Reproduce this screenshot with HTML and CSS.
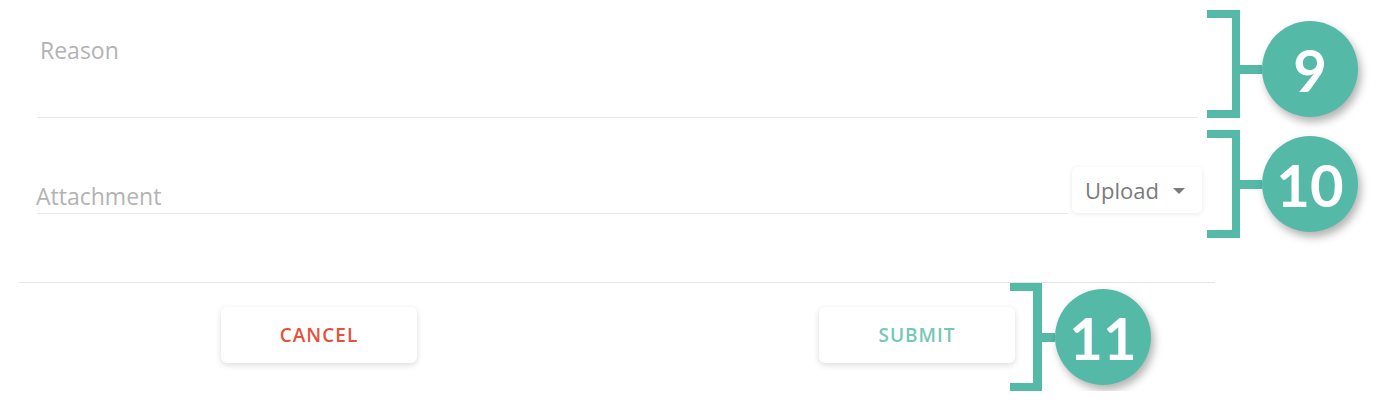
FILE: index.html
```html
<!doctype html>
<html lang="en">
<head>
<meta charset="UTF-8">
<meta name="viewport" content="width=device-width,initial-scale=1">
<title>Request form</title>
<link rel="stylesheet" href="styles.css">
</head>
<body>

<!-- ========================  FORM SHEET  ==================== -->
<div class="sheet">

  <!-- REASON -->
  <div class="row row-reason">
    <div class="field field-reason"><span class="label">Reason</span></div>
    <div class="marker low">
      <div class="bracket"></div><div class="stub"></div><div class="num">9</div>
    </div>
  </div>

  <!-- ATTACHMENT -->
  <div class="row row-attach">
    <div class="attach-box">
      <div class="field field-attach"><span class="label">Attachment</span></div>
      <button class="upload">Upload<span class="caret"></span></button>
    </div>
    <div class="marker">
      <div class="bracket"></div><div class="stub"></div><div class="num">10</div>
    </div>
  </div>

  <div class="divider"></div>

  <!-- ACTIONS -->
  <div class="row row-actions">
    <button class="btn btn-cancel">CANCEL</button>
    <button class="btn btn-submit">SUBMIT</button>
    <div class="marker tight">
      <div class="bracket"></div><div class="stub"></div><div class="num">11</div>
    </div>
  </div>

</div>
</body>
</html>
```

FILE: styles.css
```css
/* ---- Base ---------------------------------------------------------- */
html,body{margin:0;padding:0;background:#fff}
body{font-family:"Open Sans","Noto Sans",Arial,sans-serif;color:#333}
.sheet{width:1377px;padding-top:10px}
.row{display:flex}

/* ---- Fields -------------------------------------------------------- */
.field{box-sizing:border-box;border-bottom:1px solid #e5e6ee}
.label{display:block;font-size:23px;line-height:31px;color:#b3b3b3}
.row-reason{margin-left:37px;height:108px}
.field-reason{width:1161px;height:108px;padding:25px 0 0 3px}

.row-attach{margin-left:37px;margin-top:12px;height:108px}
.attach-box{display:flex;align-items:flex-end;padding-bottom:24px}
.field-attach{width:1031px;padding-bottom:1px}
.field-attach .label{margin-left:-1px}

.upload{
  display:flex;align-items:center;
  height:46px;margin:0 0 1px 4px;padding:0 17px 0 13px;
  background:#fff;border:none;border-radius:5px;
  box-shadow:0 1px 5px rgba(0,0,0,.09);
  font-family:inherit;font-size:22px;color:#7b7b7b}
.caret{
  width:0;height:0;margin-left:14px;margin-top:2px;
  border-left:6px solid transparent;border-right:6px solid transparent;
  border-top:6px solid #7b7b7b}

/* ---- Divider ------------------------------------------------------- */
.divider{margin:44px 0 0 19px;width:1196px;height:1px;background:#e4e4e4}

/* ---- Buttons ------------------------------------------------------- */
.row-actions{padding-left:221px;height:108px}
.btn{
  align-self:flex-start;margin-top:24px;
  width:196px;height:56px;
  background:#fff;border:none;border-radius:6px;
  box-shadow:0 2px 6px rgba(0,0,0,.14);
  font-family:inherit;font-size:19px;font-weight:600;letter-spacing:1px}
.btn-cancel{color:#e5513d}
.btn-submit{color:#74c8b4;margin-left:402px}

/* ---- Annotation markers -------------------------------------------- */
.marker{display:flex;align-items:center;margin-left:9px}
.bracket{
  box-sizing:border-box;width:33px;height:108px;
  border:8px solid #55b9a8;border-left:0}
.stub{width:22px;height:9px;background:#55b9a8}
.num{
  width:96px;height:96px;border-radius:50%;
  background:#55b9a8;color:#fff;
  display:flex;align-items:center;justify-content:center;
  font-family:Lato,"Open Sans",sans-serif;font-weight:700;font-size:58px;
  box-shadow:3px 5px 8px rgba(0,0,0,.3)}
.marker.low .stub,.marker.low .num{margin-top:10px}
.row-attach .marker{margin-left:5px}
.marker.tight{margin-left:-5px}
.marker.tight .bracket{width:32px;height:109px;border-width:8px 9px 9px 0}
.marker.tight .stub{width:13px}
```
